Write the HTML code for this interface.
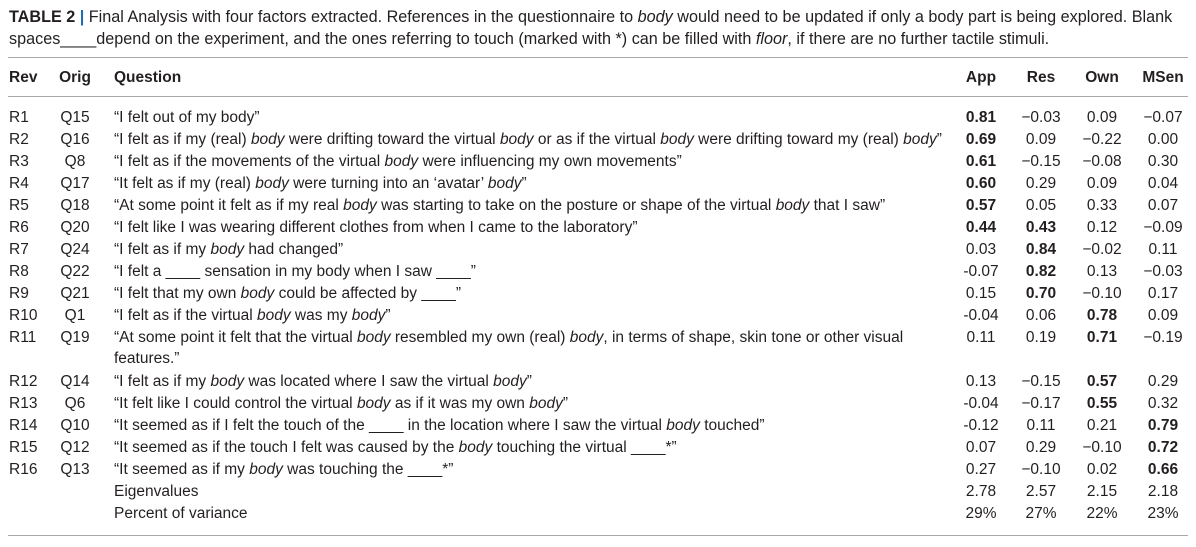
<!DOCTYPE html><html><head><style>
body{margin:0;width:1196px;height:547px;background:#fff;font-family:"Liberation Sans",Arial,sans-serif;color:#231f20;position:relative;overflow:hidden}
.cap{position:absolute;left:9px;top:6px;font-size:16.2px;line-height:22px;width:1186px;white-space:nowrap}
.cap b{font-weight:bold}.bar{color:#1f6bb5;font-weight:bold}
.hr{position:absolute;left:8px;width:1180px;height:1px;background:#a8a8a8}
.r{position:absolute;left:0;width:1196px;height:22px;font-size:15.5px;line-height:22px;white-space:nowrap}
.r span{position:absolute}
.a{left:9px}.o{left:50px;width:50px;text-align:center}.q{left:114px}
.c1,.c2,.c3,.c4{width:60px;text-align:center}
.c1{left:951px}.c2{left:1011px}.c3{left:1072px}.c4{left:1133px}
.h{font-weight:bold}
</style></head><body>
<div class="cap"><b>TABLE 2</b> <span class="bar">|</span> Final Analysis with four factors extracted. References in the questionnaire to <i>body</i> would need to be updated if only a body part is being explored. Blank<br>spaces____depend on the experiment, and the ones referring to touch (marked with *) can be filled with <i>floor</i>, if there are no further tactile stimuli.</div>
<div class="hr" style="top:57px"></div>
<div class="r h" style="top:67px"><span class="a">Rev</span><span class="o">Orig</span><span class="q">Question</span><span class="c1">App</span><span class="c2">Res</span><span class="c3">Own</span><span class="c4">MSen</span></div>
<div class="hr" style="top:96px"></div>
<div class="r" style="top:107px"><span class="a">R1</span><span class="o">Q15</span><span class="q">“I felt out of my body”</span><span class="c1"><b>0.81</b></span><span class="c2">−0.03</span><span class="c3">0.09</span><span class="c4">−0.07</span></div>
<div class="r" style="top:129px"><span class="a">R2</span><span class="o">Q16</span><span class="q">“I felt as if my (real) <i>body</i> were drifting toward the virtual <i>body</i> or as if the virtual <i>body</i> were drifting toward my (real) <i>body</i>”</span><span class="c1"><b>0.69</b></span><span class="c2">0.09</span><span class="c3">−0.22</span><span class="c4">0.00</span></div>
<div class="r" style="top:151px"><span class="a">R3</span><span class="o">Q8</span><span class="q">“I felt as if the movements of the virtual <i>body</i> were influencing my own movements”</span><span class="c1"><b>0.61</b></span><span class="c2">−0.15</span><span class="c3">−0.08</span><span class="c4">0.30</span></div>
<div class="r" style="top:173px"><span class="a">R4</span><span class="o">Q17</span><span class="q">“It felt as if my (real) <i>body</i> were turning into an ‘avatar’ <i>body</i>”</span><span class="c1"><b>0.60</b></span><span class="c2">0.29</span><span class="c3">0.09</span><span class="c4">0.04</span></div>
<div class="r" style="top:195px"><span class="a">R5</span><span class="o">Q18</span><span class="q">“At some point it felt as if my real <i>body</i> was starting to take on the posture or shape of the virtual <i>body</i> that I saw”</span><span class="c1"><b>0.57</b></span><span class="c2">0.05</span><span class="c3">0.33</span><span class="c4">0.07</span></div>
<div class="r" style="top:217px"><span class="a">R6</span><span class="o">Q20</span><span class="q">“I felt like I was wearing different clothes from when I came to the laboratory”</span><span class="c1"><b>0.44</b></span><span class="c2"><b>0.43</b></span><span class="c3">0.12</span><span class="c4">−0.09</span></div>
<div class="r" style="top:239px"><span class="a">R7</span><span class="o">Q24</span><span class="q">“I felt as if my <i>body</i> had changed”</span><span class="c1">0.03</span><span class="c2"><b>0.84</b></span><span class="c3">−0.02</span><span class="c4">0.11</span></div>
<div class="r" style="top:261px"><span class="a">R8</span><span class="o">Q22</span><span class="q">“I felt a ____ sensation in my body when I saw ____”</span><span class="c1">-0.07</span><span class="c2"><b>0.82</b></span><span class="c3">0.13</span><span class="c4">−0.03</span></div>
<div class="r" style="top:283px"><span class="a">R9</span><span class="o">Q21</span><span class="q">“I felt that my own <i>body</i> could be affected by ____”</span><span class="c1">0.15</span><span class="c2"><b>0.70</b></span><span class="c3">−0.10</span><span class="c4">0.17</span></div>
<div class="r" style="top:305px"><span class="a">R10</span><span class="o">Q1</span><span class="q">“I felt as if the virtual <i>body</i> was my <i>body</i>”</span><span class="c1">-0.04</span><span class="c2">0.06</span><span class="c3"><b>0.78</b></span><span class="c4">0.09</span></div>
<div class="r" style="top:327px"><span class="a">R11</span><span class="o">Q19</span><span class="q">“At some point it felt that the virtual <i>body</i> resembled my own (real) <i>body</i>, in terms of shape, skin tone or other visual</span><span class="c1">0.11</span><span class="c2">0.19</span><span class="c3"><b>0.71</b></span><span class="c4">−0.19</span></div>
<div class="r" style="top:348px"><span class="q">features.”</span></div>
<div class="r" style="top:371px"><span class="a">R12</span><span class="o">Q14</span><span class="q">“I felt as if my <i>body</i> was located where I saw the virtual <i>body</i>”</span><span class="c1">0.13</span><span class="c2">−0.15</span><span class="c3"><b>0.57</b></span><span class="c4">0.29</span></div>
<div class="r" style="top:393px"><span class="a">R13</span><span class="o">Q6</span><span class="q">“It felt like I could control the virtual <i>body</i> as if it was my own <i>body</i>”</span><span class="c1">-0.04</span><span class="c2">−0.17</span><span class="c3"><b>0.55</b></span><span class="c4">0.32</span></div>
<div class="r" style="top:415px"><span class="a">R14</span><span class="o">Q10</span><span class="q">“It seemed as if I felt the touch of the ____ in the location where I saw the virtual <i>body</i> touched”</span><span class="c1">-0.12</span><span class="c2">0.11</span><span class="c3">0.21</span><span class="c4"><b>0.79</b></span></div>
<div class="r" style="top:437px"><span class="a">R15</span><span class="o">Q12</span><span class="q">“It seemed as if the touch I felt was caused by the <i>body</i> touching the virtual ____*”</span><span class="c1">0.07</span><span class="c2">0.29</span><span class="c3">−0.10</span><span class="c4"><b>0.72</b></span></div>
<div class="r" style="top:459px"><span class="a">R16</span><span class="o">Q13</span><span class="q">“It seemed as if my <i>body</i> was touching the ____*”</span><span class="c1">0.27</span><span class="c2">−0.10</span><span class="c3">0.02</span><span class="c4"><b>0.66</b></span></div>
<div class="r" style="top:481px"><span class="q">Eigenvalues</span><span class="c1">2.78</span><span class="c2">2.57</span><span class="c3">2.15</span><span class="c4">2.18</span></div>
<div class="r" style="top:503px"><span class="q">Percent of variance</span><span class="c1">29%</span><span class="c2">27%</span><span class="c3">22%</span><span class="c4">23%</span></div>
<div class="hr" style="top:535px"></div>
</body></html>
